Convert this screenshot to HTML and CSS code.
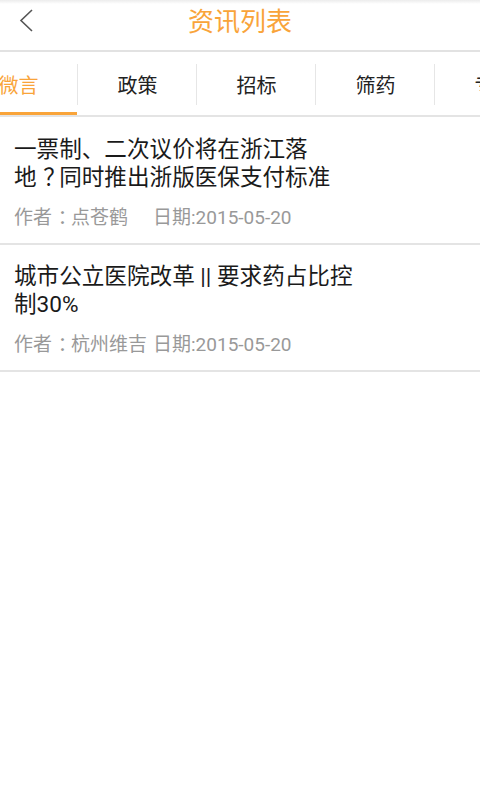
FILE: index.html
```html
<!DOCTYPE html>
<html lang="zh-CN">
<head>
<meta charset="utf-8">
<title>资讯列表</title>
<link rel="stylesheet" href="styles.css">
</head>
<body>
<div class="app">
  <header class="topbar">
    <span class="back">
      <svg width="16" height="26" viewBox="0 0 16 26"><polyline points="13,2 2,12.5 13,23" fill="none" stroke="#555" stroke-width="1.6"/></svg>
    </span>
    <h1 class="title">资讯列表</h1>
  </header>
  <nav class="tabs">
    <div class="tabs-track">
      <div class="tab active">微言</div>
      <div class="tab">政策</div>
      <div class="tab">招标</div>
      <div class="tab">筛药</div>
      <div class="tab">专题</div>
    </div>
  </nav>
  <ul class="list">
    <li class="item">
      <p class="item-title">一票制、二次议价将在浙江落地<span class="p">？</span>同时推出浙版医保支付标准</p>
      <p class="meta"><span class="author">作者<span class="p">：</span>点苍鹤</span><span class="date">日期:2015-05-20</span></p>
    </li>
    <li class="item">
      <p class="item-title">城市公立医院改革 || 要求药占比控制30%</p>
      <p class="meta"><span class="author">作者<span class="p">：</span>杭州维吉</span><span class="date">日期:2015-05-20</span></p>
    </li>
  </ul>
</div>
</body>
</html>
```

FILE: styles.css
```css
* { box-sizing: border-box; }
html, body { margin: 0; padding: 0; background: #fff; }
body {
  width: 480px;
  height: 800px;
  overflow: hidden;
  font-family: Roboto, "Noto Sans CJK SC", sans-serif;
}
.app { width: 480px; }

.topbar {
  position: relative;
  height: 52px;
  display: flex;
  align-items: center;
  justify-content: center;
  border-bottom: 2px solid #e2e2e2;
  background: linear-gradient(#ececec 0, #fff 4px, #fff 100%);
}
.back {
  position: absolute;
  left: 19px;
  top: 8px;
  width: 16px;
  height: 26px;
  display: block;
}
.back svg { display: block; }
.title {
  margin: 0 0 7px 0;
  font-size: 26px;
  font-weight: normal;
  color: #f9a43a;
  line-height: 30px;
}

.tabs {
  height: 65px;
  overflow: hidden;
  border-bottom: 2px solid #e4e4e4;
}
.tabs-track {
  display: flex;
  margin-left: -41px;
  height: 63px;
}
.tab {
  flex: 0 0 119px;
  height: 63px;
  display: flex;
  align-items: center;
  justify-content: center;
  font-size: 20px;
  color: #222;
  position: relative;
  padding-top: 2px;
}
.tab::after {
  content: "";
  position: absolute;
  right: 0;
  top: 12px;
  height: 41px;
  width: 1px;
  background: #e6e6e6;
}
.tab.active { color: #f9a43a; }
.tab.active::before {
  content: "";
  position: absolute;
  left: 0;
  right: 1px;
  bottom: 0;
  height: 3px;
  background: #f9a43a;
}

.list { list-style: none; margin: 0; padding: 0; }
.item {
  padding: 19px 14px 13px 14px;
  border-bottom: 2px solid #e4e4e4;
}
.item + .item { padding-top: 18px; }
.item-title {
  margin: 0;
  width: 338.6px;
  font-size: 22.6px;
  line-height: 27.5px;
  color: #1a1a1a;
}
/* full-width punctuation drawn centred in its cell */
.p {
  line-height: 1;
  padding-left: 0.3em;
  margin-right: -0.3em;
}
.meta {
  margin: 15px 0 0 0;
  font-size: 19px;
  line-height: 24px;
  color: #999;
  white-space: nowrap;
}
.author { display: inline-block; width: 139px; }
```
